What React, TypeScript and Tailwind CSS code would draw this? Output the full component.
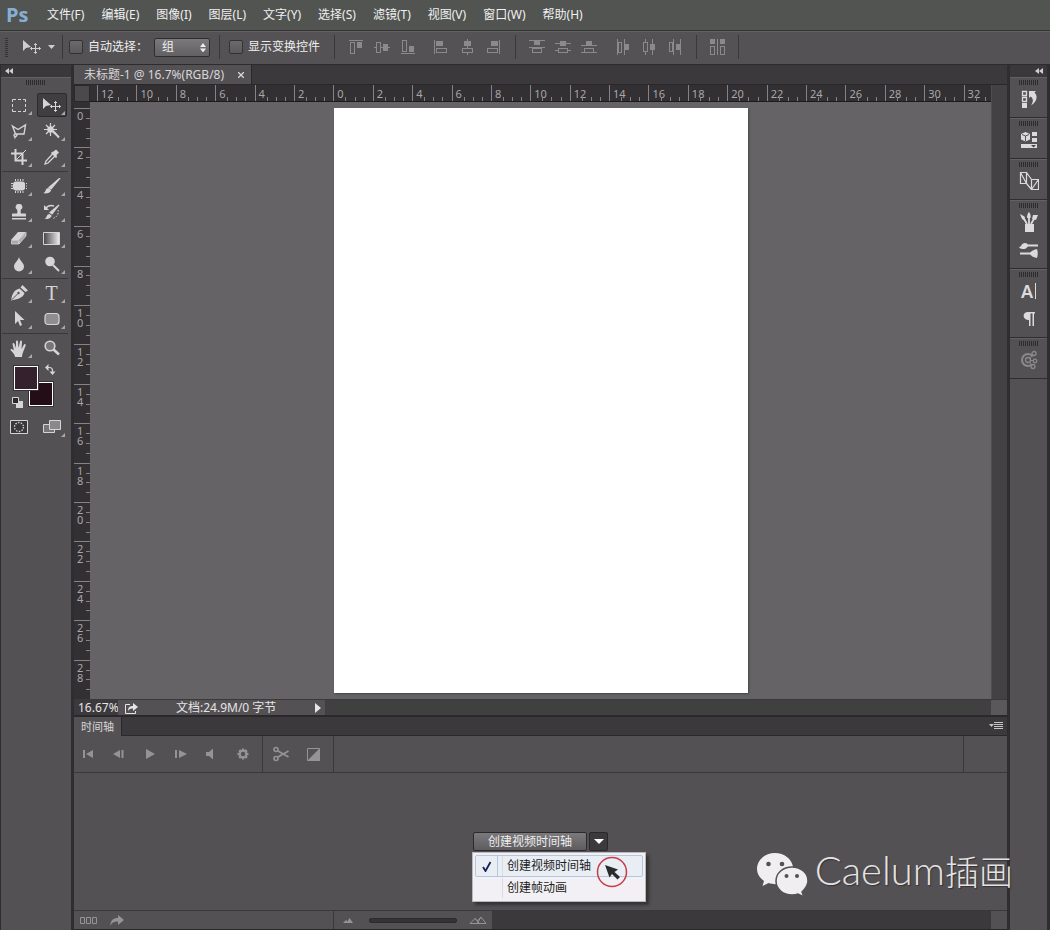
import { useState } from 'react';
import type { ReactNode } from 'react';
import clsx from 'clsx';

/* -------------------------------------------------------------------------- *
 * Photo editor workspace: menu bar, options bar, tool palette, document with
 * rulers, timeline panel and the collapsed panel dock.
 * -------------------------------------------------------------------------- */

const MENUS = ['文件(F)', '编辑(E)', '图像(I)', '图层(L)', '文字(Y)', '选择(S)', '滤镜(T)', '视图(V)', '窗口(W)', '帮助(H)'];

function Glyph({ w = 16, h = 16, children }: { w?: number; h?: number; children: ReactNode }) {
  return (
    <svg width={w} height={h} viewBox={`0 0 ${w} ${h}`} fill="none" stroke="currentColor" aria-hidden="true">
      {children}
    </svg>
  );
}

/* ------------------------------- tool glyphs ------------------------------ */

const MoveGlyph = () => (
  <Glyph w={20} h={16}>
    <path d="M1 1v11l3-3 5-1z" fill="currentColor" stroke="none" />
    <path d="M13.5 4.500v10M8.500 9.500h10M12 6l1.500-1.500L15 6M12 13l1.500 1.500L15 13M10 8L8.500 9.500 10 11M17 8l1.500 1.500L17 11" />
  </Glyph>
);

const TOOL_GROUPS: { label: string; icon: ReactNode; plain?: boolean }[][] = [
  [
    { label: '矩形选框', icon: <Glyph><path d="M1.500 5V2.500H5M7 2.500h3M12 2.500h2.500V5M14.500 7v3M14.500 12v2.500H12M10 14.500H7M5 14.500H1.500V12M1.500 10V7" /></Glyph> },
    { label: '移动', icon: <MoveGlyph /> },
    {
      label: '多边形套索',
      icon: <Glyph><path d="M1.500 3l5.500 3.500 7.500-4.500-1.500 9H4.500zM4.500 11c-2 0-2 3 0 2.500s1.500-2 .5-2M4.500 13.500l-1 2" strokeWidth="1.400" /></Glyph>,
    },
    {
      label: '魔棒',
      icon: <Glyph><path d="M9 8l6 6.500" strokeWidth="2" /><path d="M6.500 0v13M0 6.500h13M2 2l9 9M11 2l-9 9" strokeWidth="1.200" /><circle cx="6.500" cy="6.500" r="3.200" fill="currentColor" stroke="none" /></Glyph>,
    },
    { label: '裁剪', icon: <Glyph><path d="M4.500 0v11.500H16M0 4.500h11.500V16" strokeWidth="2" /><path d="M5 11L15 1" /></Glyph> },
    {
      label: '吸管',
      icon: <Glyph><path d="M9 4.500L2 12l-1 3 3-1 7.500-7.500" strokeWidth="1.300" /><path d="M8 3l1.500-.5L12 .5l3 3-2.500 2.500L13 8l-1 1-5-5z" fill="currentColor" stroke="none" /></Glyph>,
    },
  ],
  [
    {
      label: '修补',
      icon: <Glyph><rect x="2" y="3.500" width="12" height="9" rx="3" fill="currentColor" stroke="none" /><path d="M4.500 1v14M7 1v14M9.500 1v14M12 1v14M0 5.500h16M0 8h16M0 10.500h16" strokeDasharray="2 1" /></Glyph>,
    },
    {
      label: '画笔',
      icon: <Glyph w={18}><path d="M17 0L8 11l-2-1.500z" fill="currentColor" strokeWidth="1.200" /><path d="M0 15c3 0 2-5 5.500-5l2.500 2c0 3-5 4-8 3z" fill="currentColor" stroke="none" /></Glyph>,
    },
    {
      label: '仿制图章',
      icon: <Glyph><path d="M8 0a3 3 0 0 1 2 5.500c-.5 1.500-.5 3 0 4h4c1 0 1 0 1 3H1c0-3 0-3 1-3h4c.5-1 .5-2.500 0-4A3 3 0 0 1 8 0zM1 14h14v1.500H1z" fill="currentColor" stroke="none" /></Glyph>,
    },
    {
      label: '历史记录画笔',
      icon: <Glyph w={18}><path d="M16 1L9 10l-2-1.500z" fill="currentColor" strokeWidth="1.200" /><path d="M1 15c3 0 2-5 5.500-5l2 1.500c0 3-5 4-7.500 3.500z" fill="currentColor" stroke="none" /><path d="M2 5c3-4 6-4 9-3" strokeWidth="1.500" /><path d="M1 1v5h5z" fill="currentColor" stroke="none" /><path d="M15 6c1 4-1 7-5 8.500" strokeDasharray="1.500 1.500" /></Glyph>,
    },
    {
      label: '橡皮擦',
      icon: <Glyph w={18}><path d="M8 2h8l-7 8H1z" fill="currentColor" stroke="none" /><path d="M1.500 10.500h7v3.500h-7zM9 10.500l7-8V6l-7 8z" fill="#aaa8aa" stroke="currentColor" strokeWidth=".8" /></Glyph>,
    },
    {
      label: '渐变',
      icon: (
        <Glyph w={17} h={14}>
          <defs>
            <linearGradient id="ramp"><stop stopColor="#444" /><stop offset="1" stopColor="#eee" /></linearGradient>
          </defs>
          <path d="M.5 1.500h16v12H.5z" fill="url(#ramp)" />
        </Glyph>
      ),
    },
    { label: '模糊', icon: <Glyph><path d="M8 1c1 4 5 6 5 9.500a5 5 0 0 1-10 0C3 7 7 5 8 1z" fill="currentColor" stroke="none" /></Glyph> },
    { label: '减淡', icon: <Glyph><circle cx="6" cy="5.500" r="4.800" fill="currentColor" stroke="none" /><path d="M9 9l6 6" strokeWidth="2" /></Glyph> },
  ],
  [
    {
      label: '钢笔',
      icon: <Glyph w={18}><path d="M1 15.500C2 9 4 5 9.500 3.500l5 4.500C13 13 7 14.500 1 15.500z" fill="currentColor" stroke="none" /><path d="M1.500 15l6-6" stroke="#545154" /><circle cx="8.500" cy="8" r="1.200" fill="#545154" stroke="none" /><path d="M10.500 2.500L12.500 0 18 5.500 15.500 7z" fill="currentColor" stroke="none" /></Glyph>,
    },
    { label: '文字', icon: <span className="font-['Liberation_Serif',serif] text-xl leading-none">T</span> },
    { label: '路径选择', icon: <Glyph><path d="M4 0v13l3-3 2 5 2-1-2-5h4.500z" fill="currentColor" stroke="none" /></Glyph> },
    { label: '圆角矩形', icon: <Glyph><rect x="1" y="2.500" width="14" height="11" rx="3" fill="#8f8d8f" strokeWidth="1.200" /></Glyph> },
  ],
  [
    {
      label: '抓手',
      icon: <Glyph w={18} h={17}><path d="M5 17c0-3-3-5-4.500-7 0-1.500 2-1 3.500.500L2.500 4c0-1.500 1.500-1.500 2 0l1.500 4L6 1.500c0-1.500 2-1.500 2 0L8.500 8l1.500-6.500c.500-1.500 2-1 2 .5L11.500 9l2.500-4.500c1-1 2.300 0 1.500 1.500L13.500 11c-.5 2-1.500 3-1.500 6z" fill="currentColor" stroke="none" /></Glyph>,
    },
    { label: '缩放', plain: true, icon: <Glyph><circle cx="6" cy="6" r="4.800" fill="#777577" strokeWidth="1.600" /><path d="M9.500 9.500l5.500 5" strokeWidth="2.600" /></Glyph> },
  ],
];

/* ----------------------------- options glyphs ----------------------------- */

// outline: stroked path, solid: filled path, drawn on a 16px square
const ALIGN_GROUPS: { label: string; outline: string; solid: string }[][] = [
  [
    { label: '顶对齐', outline: 'M1 1.500h14M2.500 3.500h4v11h-4z', solid: 'M9 3h5v6H9z' },
    { label: '垂直居中对齐', outline: 'M0 8.500h2M7 8.500h9M2.500 3.500h4v10h-4z', solid: 'M9 5h5v7H9z' },
    { label: '底对齐', outline: 'M1 14.500h14M2.500 1.500h4v11h-4z', solid: 'M9 7h5v6H9z' },
  ],
  [
    { label: '左对齐', outline: 'M1.500 1v14M3.500 9.500h10v4h-10z', solid: 'M3 2h7v5H3z' },
    { label: '水平居中对齐', outline: 'M8.500 0v2M8.500 7v2M8.500 14v2M3.500 9.500h10v4h-10z', solid: 'M5 2h7v5H5z' },
    { label: '右对齐', outline: 'M14.500 1v14M2.500 9.500h10v4h-10z', solid: 'M6 2h7v5H6z' },
  ],
];

const DISTRIBUTE_GROUPS: { label: string; outline: string; solid: string }[][] = [
  [
    { label: '按顶分布', outline: 'M0 1.500h16M0 8.500h16M3.500 9.500h9v4h-9z', solid: 'M5 2h6v4H5z' },
    { label: '垂直居中分布', outline: 'M0 4.500h16M0 11.500h3M13 11.500h3M3.500 9.500h9v4h-9z', solid: 'M5 2h6v5H5z' },
    { label: '按底分布', outline: 'M0 6.500h16M0 13.500h16M3.500 9.500h9v4h-9z', solid: 'M5 2h6v4H5z' },
  ],
  [
    { label: '按左分布', outline: 'M2.500 0v16M9.500 0v16M3.500 3.500h3v10h-3z', solid: 'M10 5h4v6h-4z' },
    { label: '水平居中分布', outline: 'M4.500 0v3M4.500 13v3M11.500 0v16M2.500 3.500h4v9h-4z', solid: 'M9 5h5v6H9z' },
    { label: '按右分布', outline: 'M6.500 0v16M13.500 0v16M2.500 3.500h3v9h-3z', solid: 'M9 5h4v6H9z' },
  ],
];

function AlignSet({ items }: { items: { label: string; outline: string; solid: string }[] }) {
  return (
    <div className="flex">
      {items.map((item) => (
        <button key={item.label} type="button" aria-label={item.label} className="flex w-[26px] justify-center text-[#8b898b]">
          <Glyph>
            <path d={item.outline} shapeRendering="crispEdges" />
            <path d={item.solid} fill="currentColor" stroke="none" />
          </Glyph>
        </button>
      ))}
    </div>
  );
}

const Divider = ({ className }: { className?: string }) => (
  <span className={clsx('w-px shrink-0 bg-[#3a383a]', className)} />
);

function Grip({ className }: { className?: string }) {
  return (
    <span
      className={clsx('bg-[repeating-linear-gradient(90deg,#2e2c2e_0_1px,transparent_1px_2px)]', className)}
    />
  );
}

function Check({ id, label }: { id: string; label: string }) {
  return (
    <div className="flex items-center gap-[5px]">
      <input
        id={id}
        type="checkbox"
        className="size-[14px] appearance-none rounded-[2px] border border-[#343234] bg-linear-to-b from-[#6c6a6c] to-[#5b595b] checked:bg-[#9a989a]"
      />
      <label htmlFor={id}>{label}</label>
    </div>
  );
}

function MenuBar() {
  return (
    <nav className="flex h-[30px] shrink-0 items-center bg-[#525452] text-xs text-[#f0f0f0]">
      <span className="w-[39px] pl-[6px] font-['Open_Sans',sans-serif] text-xl leading-[26px] font-bold text-[#86afd2]">Ps</span>
      {MENUS.map((item) => (
        <button key={item} type="button" className="pr-[9px] pl-2">
          {item}
        </button>
      ))}
    </nav>
  );
}

function OptionsBar() {
  return (
    <div className="flex h-[35px] shrink-0 items-center border-y border-[#2d2b2d] border-t-[#333] bg-[#545254] pb-px text-xs text-[#eee] shadow-[inset_0_1px_0_#636163]">
      <span className="ml-[5px] h-[19px] w-[3px] bg-[repeating-linear-gradient(180deg,#333_0_1px,transparent_1px_2px)]" />
      <button type="button" aria-label="移动工具" className="ml-[14px] flex items-center gap-[6px] text-[#cfcdcf]">
        <MoveGlyph />
        <Glyph w={7} h={4}><path d="M0 0h7L3.500 4z" fill="currentColor" stroke="none" /></Glyph>
      </button>
      <Divider className="mr-[6px] ml-[7px] h-6" />
      <Check id="auto-select" label="自动选择：" />
      <div className="relative ml-[6px]">
        <select
          aria-label="自动选择"
          className="h-[19px] w-[56px] appearance-none rounded-[2px] border border-[#2e2c2e] bg-linear-to-b from-[#7b797b] to-[#626062] pl-[7px] text-xs leading-4"
        >
          <option>组</option>
          <option>图层</option>
        </select>
        <span className="pointer-events-none absolute top-[5px] right-1">
          <Glyph w={6} h={9}><path d="M0 4l3-4 3 4zM0 5.500h6l-3 4z" fill="currentColor" stroke="none" /></Glyph>
        </span>
      </div>
      <Divider className="mx-[9px] h-6" />
      <Check id="show-transform" label="显示变换控件" />
      <Divider className="mr-2 ml-[14px] h-6" />
      <div className="flex gap-[7px]">
        {ALIGN_GROUPS.map((g) => <AlignSet key={g[0].label} items={g} />)}
      </div>
      <Divider className="mr-2 ml-[9px] h-6" />
      <div className="flex gap-2">
        {DISTRIBUTE_GROUPS.map((g) => <AlignSet key={g[0].label} items={g} />)}
      </div>
      <Divider className="mr-[7px] ml-2 h-6" />
      <button type="button" aria-label="自动对齐图层" className="flex w-[26px] justify-center text-[#8b898b]">
        <Glyph>
          <path d="M1.500 7.500h4v8h-4zM11.500 7.500h4v8h-4zM8.500 0v16" shapeRendering="crispEdges" />
          <path d="M1 0h5v5H1zM11 0h5v5h-5z" fill="currentColor" stroke="none" />
        </Glyph>
      </button>
      <Divider className="ml-2 h-6" />
    </div>
  );
}

function CollapseBar({ align }: { align: string }) {
  return (
    <button type="button" aria-label="折叠" className={clsx('flex h-3 w-full shrink-0 items-center bg-[#3a383a] px-1 text-[#d0ced0]', align)}>
      <Glyph w={8} h={6}><path d="M4 0v6L0 3zM8 0v6L4 3z" fill="currentColor" stroke="none" /></Glyph>
    </button>
  );
}

function ToolPalette() {
  const [tool, setTool] = useState('移动');
  return (
    <aside className="w-[74px] shrink-0 border-r-[3px] border-l border-[#2f2d2f] bg-[#545154] text-[#d6d4d6]">
      <CollapseBar align="justify-start" />
      <div className="flex h-[15px] justify-center border-t border-[#636163] pt-[2px]">
        <Grip className="h-[5px] w-5" />
      </div>
      <div className="pr-[3px] pl-px">
        {TOOL_GROUPS.map((group, i) => (
          <div key={i}>
            {i > 0 && <div className="my-px h-px bg-[#3a383a]" />}
            <div className="grid grid-cols-2">
              {group.map((item) => (
                <button
                  key={item.label}
                  type="button"
                  aria-label={item.label}
                  onClick={() => setTool(item.label)}
                  className="relative flex h-[26px] items-center justify-center"
                >
                  <span
                    className={clsx(
                      'flex h-6 w-[30px] items-center justify-center rounded-[2px] border',
                      tool === item.label ? 'border-[#2c2a2c] bg-[#403e40]' : 'border-transparent'
                    )}
                  >
                    {item.icon}
                  </span>
                  {!item.plain && (
                    <span className="absolute right-[3px] bottom-[3px] text-[#aaa8aa]">
                      <Glyph w={4} h={4}><path d="M4 0v4H0z" fill="currentColor" stroke="none" /></Glyph>
                    </span>
                  )}
                </button>
              ))}
            </div>
          </div>
        ))}
      </div>
      <div className="relative mt-[5px] ml-[13px] h-10 w-[39px]">
        <button type="button" aria-label="背景色" className="absolute right-0 bottom-0 size-6 border border-white bg-[#240d16] outline outline-[#333]" />
        <button type="button" aria-label="前景色" className="absolute top-0 left-0 size-6 border border-white bg-[#35202e] outline outline-[#333]" />
        <button type="button" aria-label="切换颜色" className="absolute -top-[2px] left-[31px]">
          <Glyph w={11} h={11}><path d="M2 3.500h2.500q3 0 3 3V8" strokeWidth="1.200" /><path d="M3.500 0v7L0 3.500zM4.500 7.500h6L7.500 11z" fill="currentColor" stroke="none" /></Glyph>
        </button>
        <button type="button" aria-label="默认颜色" className="absolute -bottom-[2px] -left-[2px]">
          <Glyph w={11} h={11}><path d="M4 4h7v7H4z" fill="currentColor" stroke="none" /><path d="M.5.5h6v6h-6z" fill="#2b292b" /></Glyph>
        </button>
      </div>
      <div className="mt-2 grid grid-cols-2 pr-[3px] pl-px">
        <button type="button" aria-label="快速蒙版" className="flex h-[26px] items-center justify-center">
          <Glyph w={18} h={14}><path d="M.5.5h17v13H.5z" fill="#3a383a" /><circle cx="9" cy="7" r="4.500" strokeDasharray="1.500 1.300" strokeWidth="1.300" /></Glyph>
        </button>
        <button type="button" aria-label="屏幕模式" className="relative flex h-[26px] items-center justify-center">
          <Glyph w={18} h={14}><path d="M.5 4.500h11v8H.5z" fill="#777577" /><path d="M6.500.5h11v9h-11z" fill="#8a888a" /></Glyph>
          <span className="absolute right-[3px] bottom-[3px] text-[#aaa8aa]">
            <Glyph w={4} h={4}><path d="M4 0v4H0z" fill="currentColor" stroke="none" /></Glyph>
          </span>
        </button>
      </div>
    </aside>
  );
}

/* ---------------------------------- rulers -------------------------------- */

const H_MARKS = Array.from({ length: 23 }, (_, i) => Math.abs(i * 2 - 12));
const V_MARKS = Array.from({ length: 15 }, (_, i) => i * 2);

function TopRuler() {
  return (
    <div className="h-[17px] min-w-0 flex-1 overflow-hidden border-b border-[#1c1b1c] bg-[#323032]">
      <div className="ml-[7px] flex h-full w-[906px]">
        {H_MARKS.map((n, i) => (
          <div key={i} className="flex min-w-0 flex-1 items-end border-l border-[#858385]">
            <span className="w-0 self-start pt-px pl-[3px] text-[11px] leading-[15px] text-[#a9a7a9]">{n}</span>
            <span className="flex flex-1 justify-evenly">
              <i className="h-1 w-px bg-[#858385]" />
              <i className="h-1 w-px bg-[#858385]" />
              <i className="h-1 w-px bg-[#858385]" />
            </span>
          </div>
        ))}
      </div>
    </div>
  );
}

function SideRuler() {
  return (
    <div className="w-4 shrink-0 overflow-hidden bg-[#323032]">
      <div className="mt-[6px] flex h-[591px] flex-col">
        {V_MARKS.map((n) => (
          <div key={n} className="flex min-h-0 flex-1 justify-between border-t border-[#858385]">
            {/* one digit wide, so two-digit marks stack */}
            <span className="ml-[3px] w-2 pt-[2px] text-[11px] leading-[10px] break-all text-[#a9a7a9]">{n}</span>
            <span className="flex flex-col items-end justify-evenly">
              <i className="h-px w-1 bg-[#858385]" />
              <i className="h-px w-1 bg-[#858385]" />
              <i className="h-px w-1 bg-[#858385]" />
            </span>
          </div>
        ))}
      </div>
    </div>
  );
}

function DocumentView() {
  return (
    <section className="flex min-h-0 flex-1 flex-col">
      <div className="flex h-5 shrink-0 border-b border-[#2a282a] bg-[#3b393b]">
        <div className="flex items-center gap-[14px] border-r border-[#2a282a] bg-[#545154] pt-px pr-[7px] pl-[10px] text-xs text-[#d8d6d8]">
          <span>未标题-1 @ 16.7%(RGB/8)</span>
          <button type="button" aria-label="关闭">
            <Glyph w={6} h={6}><path d="M0 0l6 6M6 0L0 6" strokeWidth="1.300" /></Glyph>
          </button>
        </div>
      </div>
      <div className="flex min-h-0 flex-1">
        <div className="flex min-w-0 flex-1 flex-col">
          <div className="flex shrink-0">
            <span className="w-4 border border-[#2a282a] bg-[#4b494b]" />
            <TopRuler />
          </div>
          <div className="flex min-h-0 flex-1">
            <SideRuler />
            <main className="flex min-w-0 flex-1 items-center justify-center bg-[#656366]">
              <div className="h-[585px] w-[414px] bg-white shadow-[1px_1px_2px_#444]" />
            </main>
          </div>
        </div>
        <div className="w-4 shrink-0 border-l border-[#4f4d4f] bg-[#434143]" />
      </div>
      <footer className="flex h-[18px] shrink-0 border-t border-b-2 border-[#3a383a] border-b-[#2a282a] bg-[#414041] text-xs leading-4 text-[#e6e4e6]">
        <span className="w-11 bg-[#3b393b] pl-1">16.67%</span>
        <div className="flex w-[207px] items-center bg-[#545154]">
          <button type="button" aria-label="导出" className="ml-[7px]">
            <Glyph w={14} h={12}><path d="M5 2.500H.5v9h10V9" /><path d="M3 9c0-4 2-5 5-5V1l5 4-5 4V6.500C6 6.500 4 7 3 9z" fill="currentColor" stroke="none" /></Glyph>
          </button>
          <span className="ml-[37px] flex-1">文档:24.9M/0 字节</span>
          <button type="button" aria-label="文档信息" className="mr-1">
            <Glyph w={6} h={10}><path d="M0 0v10l6-5z" fill="currentColor" stroke="none" /></Glyph>
          </button>
        </div>
        <span className="ml-auto w-4 bg-[#5a585a]" />
      </footer>
    </section>
  );
}

/* --------------------------------- timeline ------------------------------- */

const TRANSPORT: { label: string; icon: ReactNode }[] = [
  { label: '第一帧', icon: <path d="M3 4h2v8H3zM13 4v8L6 8z" /> },
  { label: '上一帧', icon: <path d="M9 4v8L2 8zM10.500 4h2v8h-2z" /> },
  { label: '播放', icon: <path d="M4 3v10l9-5z" /> },
  { label: '下一帧', icon: <path d="M2 4h2v8H2zM6 4v8l8-4z" /> },
  { label: '静音', icon: <path d="M2 6h3l4-3.500v11L5 10H2z" /> },
  {
    label: '设置',
    icon: <path fillRule="evenodd" d="M7 2.500h2l.3 1.600L11 3.200 12.600 5l-1 1.400 1.900.6v2l-1.800.5 1 1.600L11 12.700l-1.600-1L9 13.500H7l-.4-1.800-1.600 1L3.400 11l1-1.500L2.500 9V7l1.900-.5-1-1.500L5 3.300l1.600.9zM8 5.800a2.200 2.200 0 1 0 .01 4.400A2.200 2.200 0 0 0 8 5.800z" />,
  },
];

const CREATE_MODES = ['创建视频时间轴', '创建帧动画'];

function CreateTimeline() {
  const [mode, setMode] = useState(0);
  return (
    <div className="relative flex gap-[2px]">
      <button
        type="button"
        className="h-[19px] w-[114px] rounded-[2px] border border-[#2c2a2c] bg-linear-to-b from-[#7b797b] to-[#5e5c5e] text-xs leading-[16px] text-[#eee]"
      >
        {CREATE_MODES[mode]}
      </button>
      <button
        type="button"
        aria-label="选择时间轴类型"
        className="flex h-[19px] w-[19px] items-center justify-center rounded-[2px] border border-[#2a282a] bg-[#3c3a3c] text-white"
      >
        <Glyph w={10} h={5}><path d="M0 0h10L5 5z" fill="currentColor" stroke="none" /></Glyph>
      </button>
      <div role="menu" className="absolute top-5 -left-px w-[174px] border border-[#b9b7b9] bg-[#f2f0f4] p-[2px] text-xs text-[#1b1b1b] shadow-[3px_3px_3px_#333]">
        {CREATE_MODES.map((item, i) => (
          <button
            key={item}
            type="button"
            role="menuitem"
            onClick={() => setMode(i)}
            className={clsx(
              'flex h-[22px] w-full items-center rounded-[2px] border',
              mode === i ? 'border-[#b2c8de] bg-[#e9eef5]' : 'border-transparent'
            )}
          >
            <span className={clsx('flex h-full w-[22px] items-center justify-center border-r', mode === i ? 'border-[#b2c8de]' : 'border-transparent')}>
              {mode === i && <Glyph w={10} h={11}><path d="M1 6l2.500 4L8.500 1" stroke="#15225a" strokeWidth="1.800" /></Glyph>}
            </span>
            <span className="ml-1 h-full border-l border-[#dcdadf]" />
            <span className="ml-[4px] leading-5">{item}</span>
          </button>
        ))}
        <span className="pointer-events-none absolute top-[3px] right-[17px]">
          <Glyph w={32} h={32}>
            <circle cx="16" cy="16" r="14.500" stroke="#c83c48" strokeWidth="1.500" />
            <path d="M9 9l13 4.500-3.500 2.500 5.500 5-2.500 2.500-5.500-5.500-2.500 3.500z" fill="#2b2b2b" stroke="none" />
          </Glyph>
        </span>
      </div>
    </div>
  );
}

function Timeline() {
  return (
    <section className="flex h-[213px] shrink-0 flex-col border-b border-[#2a282a] bg-[#545154] text-[#959395]">
      <div className="flex h-[19px] shrink-0 bg-[#3b393b]">
        <span className="border-r border-[#2a282a] bg-[#545154] px-[7px] text-[11px] leading-[19px] text-[#d8d6d8]">时间轴</span>
        <div className="flex flex-1 items-center justify-end border-b border-[#2a282a] pr-1 text-[#c5c3c5]">
          <button type="button" aria-label="面板菜单">
            <Glyph w={14} h={10}><path d="M0 3h5L2.500 6z" fill="currentColor" stroke="none" /><path d="M5 1.500h9M5 3.500h9M5 5.500h9M5 7.500h9" shapeRendering="crispEdges" /></Glyph>
          </button>
        </div>
      </div>
      <div className="flex h-[37px] shrink-0 border-b border-[#3a383a]">
        {TRANSPORT.map(({ label, icon }) => (
          <button key={label} type="button" aria-label={label} className="flex w-[31px] items-center justify-center pr-[3px]">
            <svg width="16" height="16" viewBox="0 0 16 16" fill="currentColor" aria-hidden="true">{icon}</svg>
          </button>
        ))}
        <Divider className="ml-[2px]" />
        <button type="button" aria-label="拆分" className="flex w-[35px] items-center justify-center">
          <Glyph><circle cx="3" cy="3.500" r="2" strokeWidth="1.600" /><circle cx="3" cy="12.500" r="2" strokeWidth="1.600" /><path d="M5 5l10.500 6M5 11l10.500-6" strokeWidth="1.800" /></Glyph>
        </button>
        <button type="button" aria-label="过渡效果" className="flex w-[35px] items-center justify-center pr-1">
          <Glyph w={13} h={13}><path d="M.5.5h12v12H.5z" /><path d="M13 0v13H0z" fill="currentColor" stroke="none" /></Glyph>
        </button>
        <Divider />
        <span className="flex-1" />
        <Divider className="mr-[43px]" />
      </div>
      <div className="flex min-h-0 flex-1 items-center justify-center">
        <CreateTimeline />
      </div>
      <div className="flex h-[19px] shrink-0 border-t border-[#3a383a] bg-[#3b393b]">
        <div className="flex w-[259px] items-center gap-3 bg-[#545154] pl-[6px]">
          <button type="button" aria-label="转换为帧动画">
            <Glyph w={18} h={7}><path d="M.5.5h4v6h-4zM6.500.5h4v6h-4zM12.500.5h4v6h-4z" /></Glyph>
          </button>
          <button type="button" aria-label="渲染视频">
            <Glyph w={14} h={11}><path d="M0 11c1-6 3-8 8-8V0l6 5-6 5V6.500c-4 0-6 1-8 4.500z" fill="currentColor" stroke="none" /></Glyph>
          </button>
        </div>
        <Divider />
        <div className="flex w-[158px] items-center bg-[#545154]">
          <span className="ml-[9px]"><Glyph w={10} h={5}><path d="M0 5l3-3 1.500 1.500L6.500 0 10 5z" fill="currentColor" stroke="none" /></Glyph></span>
          <input
            type="range"
            aria-label="时间轴缩放"
            className="mr-3 ml-4 h-[5px] w-[88px] appearance-none rounded-[2px] border border-[#2c2a2c] bg-[#353335] [&::-webkit-slider-thumb]:appearance-none"
          />
          <Glyph w={18} h={8}><path d="M1 7.500l5-5 2.500 2.500L12 1l5 6.500zM6 2.500l4.500 5M12 1L8 7.500" /></Glyph>
        </div>
        <span className="flex-1" />
        <span className="w-4 bg-[#545154]" />
      </div>
    </section>
  );
}

/* -------------------------------- panel dock ------------------------------ */

const DOCK: { label: string; icon: ReactNode }[][] = [
  [
    {
      label: '历史记录',
      icon: <Glyph w={18} h={18}><path d="M2.500 1.500h4v4h-4zM2.500 7.500h4v4h-4z" strokeWidth="1.300" /><path d="M2 13h5v5H2z" fill="currentColor" stroke="none" /><path d="M9 1h7l-1.500 1.500c4 4 2 10-3.500 13 2.500-4 2.500-7-.5-9L9 8z" fill="currentColor" stroke="none" /></Glyph>,
    },
  ],
  [
    {
      label: '属性',
      icon: <Glyph w={18} h={18}><path d="M5.500 1l4.500 2v5.500l-4.500 2-4.500-2V3z" fill="currentColor" stroke="none" /><path d="M2 3.500l3.500 1.500L9 3.500M5.500 5v5" stroke="#545154" /><path d="M12 1h5v4h-5zM12 7h5v4h-5zM1 13h16v4H1z" fill="currentColor" stroke="none" /><path d="M11 14h5l-2.500 2.500z" fill="#444" stroke="none" /></Glyph>,
    },
  ],
  [{ label: '图层复合', icon: <Glyph w={20} h={20}><path d="M1.500 1.500h6v11h-6zM12.500 8.500h7v10h-7zM1.500 1.500l6 11M7.500 1.500l5 7M7.500 12.500l5 6M12.500 18.500l7-10" strokeWidth="1.200" /></Glyph> }],
  [
    {
      label: '画笔预设',
      icon: <Glyph w={18} h={20}><path d="M5 12h9v8H5z" fill="currentColor" stroke="none" /><path d="M7 12L3.500 6M9 12V4M11 12l3.500-6" strokeWidth="1.800" /><path d="M0 2l4.500 2.500L5.500 9 2 7zM7 6c0-2 .5-5 2-6 1.500 2 2 4 1.500 6zM12 7l1-4 5 0-2 5z" fill="currentColor" stroke="none" /></Glyph>,
    },
    {
      label: '画笔',
      icon: <Glyph w={20} h={18}><path d="M8 4.500h11M1 12.500h11" strokeWidth="2" /><path d="M0 6c3 0 2-4 6-4 2 0 3 1 3 2.500S7 8 5 8 1 8 0 6zM11 12c1-2 3-3 7-4q1.500 4 0 9c-4-1-6-2-7-4z" fill="currentColor" stroke="none" /></Glyph>,
    },
  ],
  [
    {
      label: '字符',
      icon: (
        <span className="flex items-center gap-[2px]">
          <span className="text-lg leading-none font-semibold">A</span>
          <span className="h-4 w-px bg-current" />
        </span>
      ),
    },
    { label: '段落', icon: <Glyph><path d="M14 1v1.500h-1V15h-1.500V2.500h-2V15H8V9C1 9 1 1 7 1z" fill="currentColor" stroke="none" /></Glyph> },
  ],
  [
    {
      label: '扩展',
      icon: <span className="text-[#8b898b]"><Glyph w={18} h={20}><circle cx="8" cy="10" r="6" strokeWidth="2" strokeDasharray="28 10" strokeDashoffset="-5" /><circle cx="8" cy="10" r="2.500" strokeWidth="1.300" /><circle cx="14" cy="3.500" r="2" strokeWidth="1.300" /><circle cx="15" cy="11" r="1.800" strokeWidth="1.300" /><circle cx="13" cy="16.500" r="2" strokeWidth="1.300" /><path d="M10 8l3-3M10.500 10.500h3M9.500 12l2.500 3.500" /></Glyph></span>,
    },
  ],
];

function Dock() {
  return (
    <aside className="w-[43px] shrink-0 border-x-[3px] border-[#2f2d2f] bg-[#545154] text-[#dcdadc]">
      <CollapseBar align="justify-end" />
      {DOCK.map((group, i) => (
        <div key={i} className="flex flex-col items-center border-b border-[#2f2d2f] pt-[3px] pb-1 shadow-[inset_0_1px_0_#636163]">
          <Grip className="h-[5px] w-5" />
          {group.map((item) => (
            <button key={item.label} type="button" aria-label={item.label} className="flex h-7 w-full items-center justify-center">
              {item.icon}
            </button>
          ))}
        </div>
      ))}
    </aside>
  );
}

function Watermark() {
  return (
    <div className="pointer-events-none absolute right-[37px] bottom-[31px] flex items-center gap-[6px] text-[#e4e2e4]">
      <svg width="52" height="46" viewBox="0 0 52 46" aria-hidden="true">
        <g fill="#f0eef1">
          <path d="M18 1C8 1 0 8 0 17c0 5 3 9 7 12l-1.500 5 6-3c3 1 7 1.500 9 1L36 15C35 7 27 1 18 1z" />
          <path d="M35 15c-9 0-16 6-16 14s7 14 16 14c2 0 4 0 6-1l6 3-2-5c3-3 6-6 6-11 0-8-7-14-16-14z" stroke="#545154" strokeWidth="1.500" />
        </g>
        <g fill="#545154">
          <circle cx="11.500" cy="12" r="2.300" />
          <circle cx="25" cy="12" r="2.300" />
          <circle cx="29.500" cy="24" r="2" />
          <circle cx="40" cy="24" r="2" />
        </g>
      </svg>
      <span className="flex items-baseline pb-2 font-light [text-shadow:1px_1px_1px_#333]">
        <span className="font-['Lato',sans-serif] text-[40px] leading-10">Caelum</span>
        <span className="font-['Noto_Sans_CJK_SC',sans-serif] text-[34px] leading-10">插画</span>
      </span>
    </div>
  );
}

export default function App() {
  return (
    <div className="relative flex h-screen flex-col overflow-hidden bg-[#2f2d2f] font-['Noto_Sans','Noto_Sans_CJK_SC',sans-serif]">
      <MenuBar />
      <OptionsBar />
      <div className="flex min-h-0 flex-1">
        <ToolPalette />
        <div className="flex min-w-0 flex-1 flex-col">
          <DocumentView />
          <Timeline />
        </div>
        <Dock />
      </div>
      <Watermark />
    </div>
  );
}
